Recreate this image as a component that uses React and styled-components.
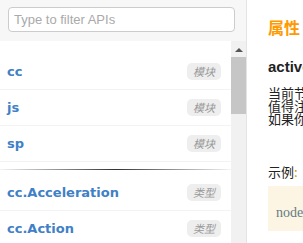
import React from 'react'
import styled, { createGlobalStyle } from 'styled-components'

const GlobalStyle = createGlobalStyle`
html, body {
  margin: 0;
  padding: 0;
  height: 100%;
  overflow: hidden;
  background: #fff;
}
`

const Page = styled.div`
display: flex;
height: 100vh;
font-family: "Liberation Sans", "Noto Sans CJK SC", sans-serif;
`

const Sidebar = styled.aside`
width: 246px;
flex: none;
display: flex;
flex-direction: column;
border-right: 1px solid #e4e4e4;
`

const SearchBar = styled.div`
flex: none;
background: #f7f7f7;
height: 41px;
box-sizing: border-box;
padding: 7px 11px 0 8px;
`

const Search = styled.input`
display: block;
width: 100%;
height: 25px;
box-sizing: border-box;
border: 1px solid #ccc;
border-radius: 4px;
padding: 0 5px;
font-family: "Liberation Sans", Arial, sans-serif;
font-size: 13px;
color: #333;
outline: none;
&::placeholder {
  color: #aaa;
}
`

const ListArea = styled.div`
flex: 1;
min-height: 0;
display: flex;
`

const List = styled.ul`
flex: 1;
min-width: 0;
list-style: none;
margin: 0;
padding: 13px 0 0;
overflow: hidden;
`

const Rail = styled.div`
width: 15px;
flex: none;
display: flex;
flex-direction: column;
background: #f1f1f1;
`

const RailButton = styled.div`
height: 16px;
display: flex;
align-items: center;
justify-content: center;
`

const Thumb = styled.div`
height: 57px;
background: #c6c6c6;
`

const Item = styled.li`
height: 36px;
box-sizing: border-box;
display: flex;
align-items: center;
justify-content: space-between;
padding: 0 10px 0 7px;
border-bottom: 1px solid #f3f3f3;
`

const Name = styled.a`
font-family: "DejaVu Sans", sans-serif;
font-weight: bold;
font-size: 13px;
color: #4080c6;
text-decoration: none;
`

const Badge = styled.span`
font-family: "Noto Sans CJK SC", sans-serif;
font-style: italic;
font-size: 11px;
line-height: 17px;
height: 17px;
padding: 0 6px;
border-radius: 5px;
background: #eee;
color: #999;
`

const Divider = styled.li`
height: 1px;
margin: 7px 0 5px;
background: linear-gradient(to right, #f4f4f4, #333 50%, #f4f4f4);
`

const Content = styled.main`
flex: 1;
min-width: 0;
padding: 16px 0 0 21px;
overflow: hidden;
white-space: nowrap;
`

const Heading = styled.h2`
margin: 0;
font-family: "Noto Sans CJK SC", sans-serif;
font-size: 16px;
line-height: 22px;
font-weight: bold;
color: #f90;
`

const PropName = styled.h3`
margin: 19px 0 0;
font-size: 15px;
line-height: 20px;
font-weight: bold;
color: #222;
`

const Text = styled.p`
margin: ${p => p.$gap || 0}px 0 0;
font-family: "Noto Sans CJK SC", sans-serif;
font-size: 13px;
line-height: 13px;
color: #222;
`

const Colon = styled.span`
color: #c90;
`

const Code = styled.pre`
margin: 8px 0 0;
padding: 17px 8px 8px;
background: #fcf5e4;
font-family: "Liberation Serif", serif;
font-size: 14px;
line-height: 20px;
color: #657b83;
`

const modules = ['cc', 'js', 'sp']
const classes = [
  'cc.Acceleration', 'cc.Action', 'cc.ActionEase', 'cc.ActionInstant',
  'cc.ActionInterval', 'cc.Animation',
]

const ArrowUp = () => (
  <svg width="8" height="5" viewBox="0 0 8 5">
    <path d="M0 5 L4 1 L8 5 Z" fill="#555" />
  </svg>
)

export default function App() {
  return (
    <Page>
      <GlobalStyle />
      <Sidebar>
        <SearchBar>
          <Search placeholder="Type to filter APIs" />
        </SearchBar>
        <ListArea>
          <List>
            {modules.map(m => (
              <Item key={m}>
                <Name href="#">{m}</Name>
                <Badge>模块</Badge>
              </Item>
            ))}
            <Divider />
            {classes.map(c => (
              <Item key={c}>
                <Name href="#">{c}</Name>
                <Badge>类型</Badge>
              </Item>
            ))}
          </List>
          <Rail>
            <RailButton><ArrowUp /></RailButton>
            <Thumb />
          </Rail>
        </ListArea>
      </Sidebar>
      <Content>
        <Heading>属性</Heading>
        <PropName>active</PropName>
        <Text $gap={9}>
          当前节点的自身激活状态。<br />
          值得注意的是，一个节点的父节点如果不被激活，那么即使它自身设为激活，它仍然无法激活。<br />
          如果你想检查节点在场景中实际的激活状态可以使用 activeInHierarchy。
        </Text>
        <Text $gap={40}>示例<Colon>:</Colon></Text>
        <Code>node.active = false;</Code>
      </Content>
    </Page>
  )
}
